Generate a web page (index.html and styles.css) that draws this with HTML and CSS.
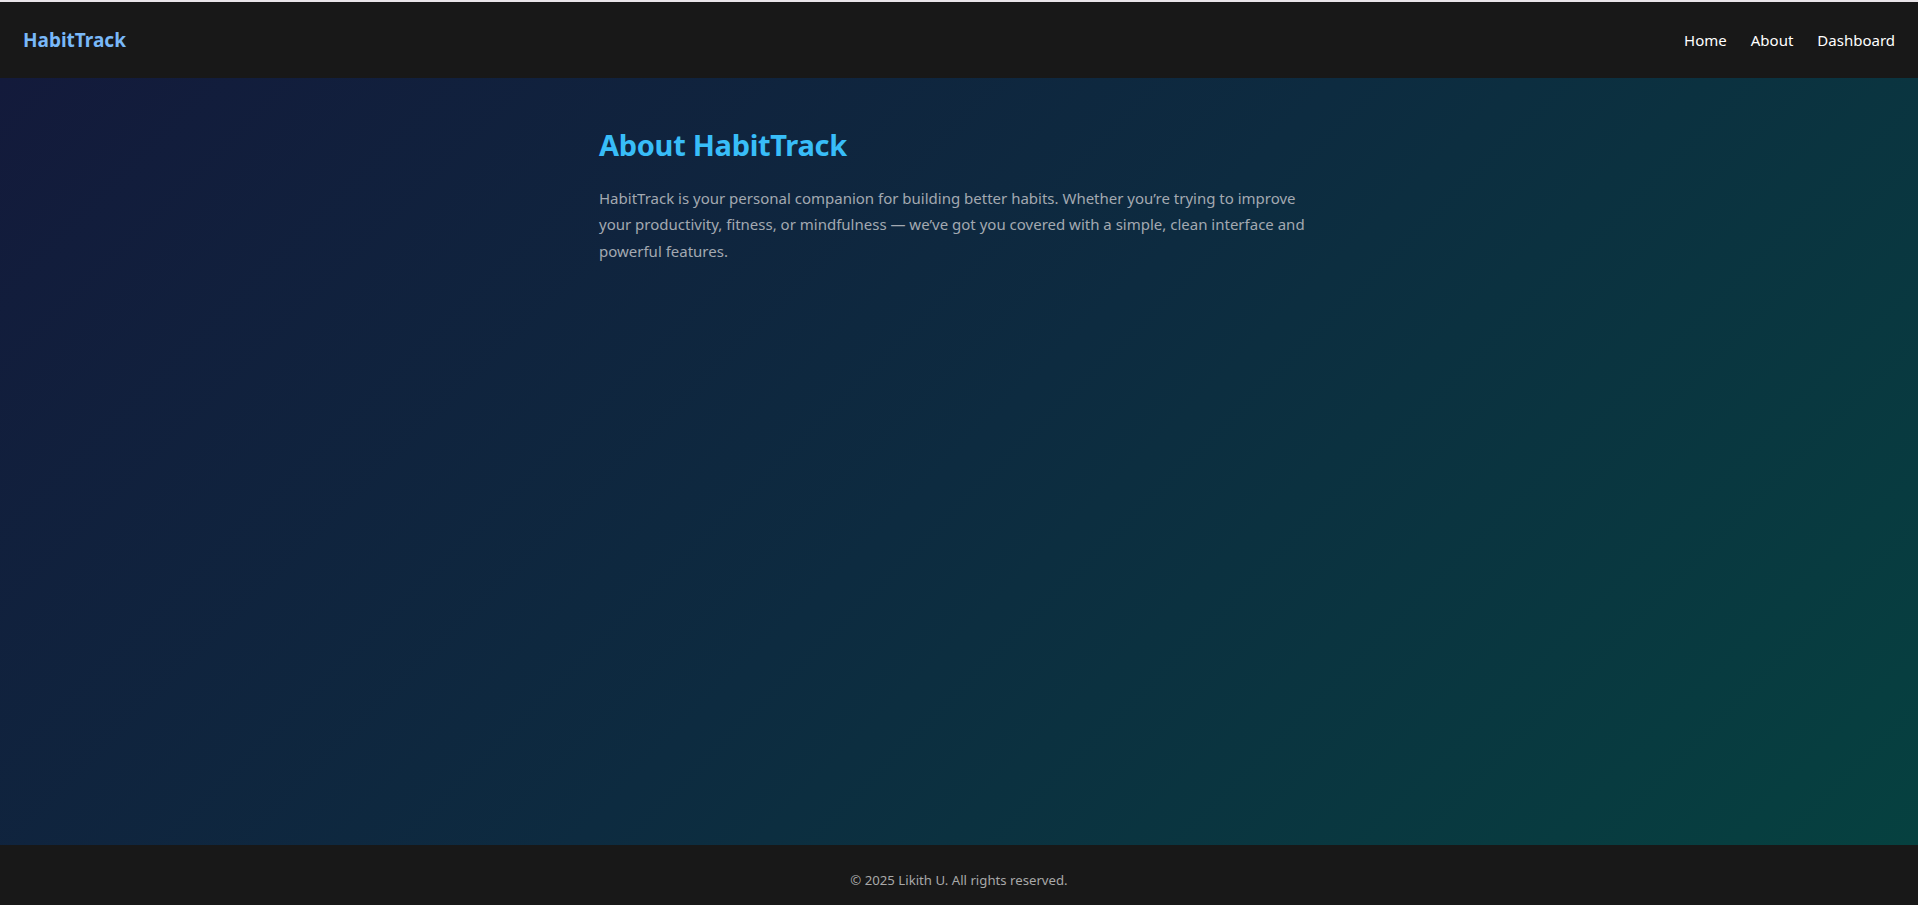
FILE: index.html
```html
<!DOCTYPE html>
<html lang="en">
<head>
<meta charset="utf-8">
<title>About - HabitTrack</title>
<link rel="stylesheet" href="styles.css">
</head>
<body>
<div class="topline"></div>
<header class="site-header">
  <a class="logo" href="#">HabitTrack</a>
  <nav class="nav">
    <a href="#">Home</a>
    <a href="#">About</a>
    <a href="#">Dashboard</a>
  </nav>
</header>
<main class="main">
  <section class="about">
    <h1 class="about-title">About HabitTrack</h1>
    <p class="about-text">HabitTrack is your personal companion for building better habits. Whether you’re trying to improve your productivity, fitness, or mindfulness — we’ve got you covered with a simple, clean interface and powerful features.</p>
  </section>
</main>
<footer class="site-footer">
  <p>© 2025 Likith U. All rights reserved.</p>
</footer>
</body>
</html>
```
FILE: styles.css
```css
* { box-sizing: border-box; }
html, body { height: 100%; }
body {
  margin: 0;
  font-family: "Noto Sans", "Open Sans", sans-serif;
  display: flex;
  flex-direction: column;
  min-height: 100vh;
  background: #181818;
}
.topline { height: 2px; background: #e8e4e8; flex: none; }
.site-header {
  flex: none;
  height: 76px;
  background: #181818;
  display: flex;
  align-items: center;
  justify-content: space-between;
  padding: 0 23px;
}
.logo {
  color: #79b8f8;
  font-weight: 700;
  font-size: 19px;
  text-decoration: none;
}
.nav { display: flex; gap: 24px; }
.nav a {
  color: #ffffff;
  text-decoration: none;
  font-size: 15px;
}
.main {
  flex: 1;
  background: linear-gradient(135deg, #131a3b 0%, #0d2b40 50%, #064140 100%);
  padding-top: 50px;
}
.about { max-width: 720px; margin: 0 auto; }
.about-title {
  margin: 0 0 22px;
  font-size: 29px;
  letter-spacing: -0.3px;
  line-height: 1.2;
  color: #38bdf8;
  font-weight: 700;
}
.about-text {
  margin: 0;
  font-size: 15px;
  line-height: 26.4px;
  color: #a3a9b1;
}
.site-footer {
  flex: none;
  height: 60px;
  background: #181818;
  display: flex;
  align-items: center;
  justify-content: center;
  padding-top: 10px;
}
.site-footer p {
  margin: 0;
  font-size: 13.2px;
  color: #a8a8a8;
}
```
